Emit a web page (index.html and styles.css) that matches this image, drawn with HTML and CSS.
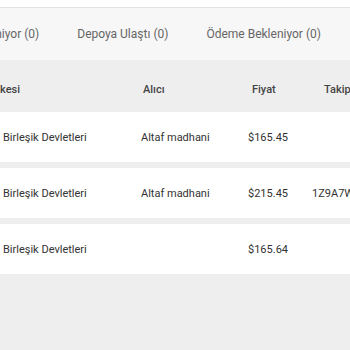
FILE: index.html
```html
<!DOCTYPE html>
<html>
<head>
<meta charset="utf-8">
<link rel="stylesheet" href="styles.css">
</head>
<body>
<div class="page">
  <div class="topbar"></div>
  <div class="tabs">
    <div class="tab first">Bekleniyor (0)</div>
    <div class="tab">Depoya Ulaştı (0)</div>
    <div class="tab">Ödeme Bekleniyor (0)</div>
  </div>
  <div class="table">
    <div class="row head">
      <div class="c1"><span class="cut">Ülkesi</span></div>
      <div class="c2">Alıcı</div>
      <div class="c3">Fiyat</div>
      <div class="c4">Takip Numarası</div>
    </div>
    <div class="row body">
      <div class="c1">Birleşik Devletleri</div>
      <div class="c2">Altaf madhani</div>
      <div class="c3">$165.45</div>
      <div class="c4"></div>
    </div>
    <div class="row body">
      <div class="c1">Birleşik Devletleri</div>
      <div class="c2">Altaf madhani</div>
      <div class="c3">$215.45</div>
      <div class="c4">1Z9A7W3E0312345678</div>
    </div>
    <div class="row body">
      <div class="c1">Birleşik Devletleri</div>
      <div class="c2"></div>
      <div class="c3">$165.64</div>
      <div class="c4"></div>
    </div>
  </div>
</div>
</body>
</html>
```

FILE: styles.css
```css
html, body {
  margin: 0;
  padding: 0;
  width: 350px;
  height: 350px;
  overflow: hidden;
  background: #eeeeee;
  font-family: Roboto, "Liberation Sans", sans-serif;
}
.page {
  width: 350px;
  overflow: hidden;
}
.topbar {
  height: 7px;
  background: #ffffff;
  border-bottom: 1px solid #e2e2e2;
}
.tabs {
  height: 52px;
  background: #f7f7f7;
  display: flex;
  align-items: center;
  gap: 38px;
  white-space: nowrap;
}
.tab {
  font-size: 12px;
  color: #666666;
  flex: none;
}
.tab.first {
  margin-left: -34px;
}
.table {
  display: flex;
  flex-direction: column;
  gap: 6px;
}
.row {
  display: grid;
  grid-template-columns: 138px 107px 64px 120px;
  align-items: center;
  padding-left: 3px;
  white-space: nowrap;
  font-size: 11px;
}
.head {
  box-sizing: border-box;
  height: 52px;
  padding-top: 6px;
  background: #eeeeee;
  font-weight: 500;
  color: #444444;
  margin-bottom: -6px;
}
.head .cut { margin-left: -13px; }
.head .c2 { padding-left: 2px; }
.head .c3 { padding-left: 4px; }
.head .c4 { padding-left: 12px; }
.body {
  height: 50px;
  background: #ffffff;
  color: #333333;
}
```
